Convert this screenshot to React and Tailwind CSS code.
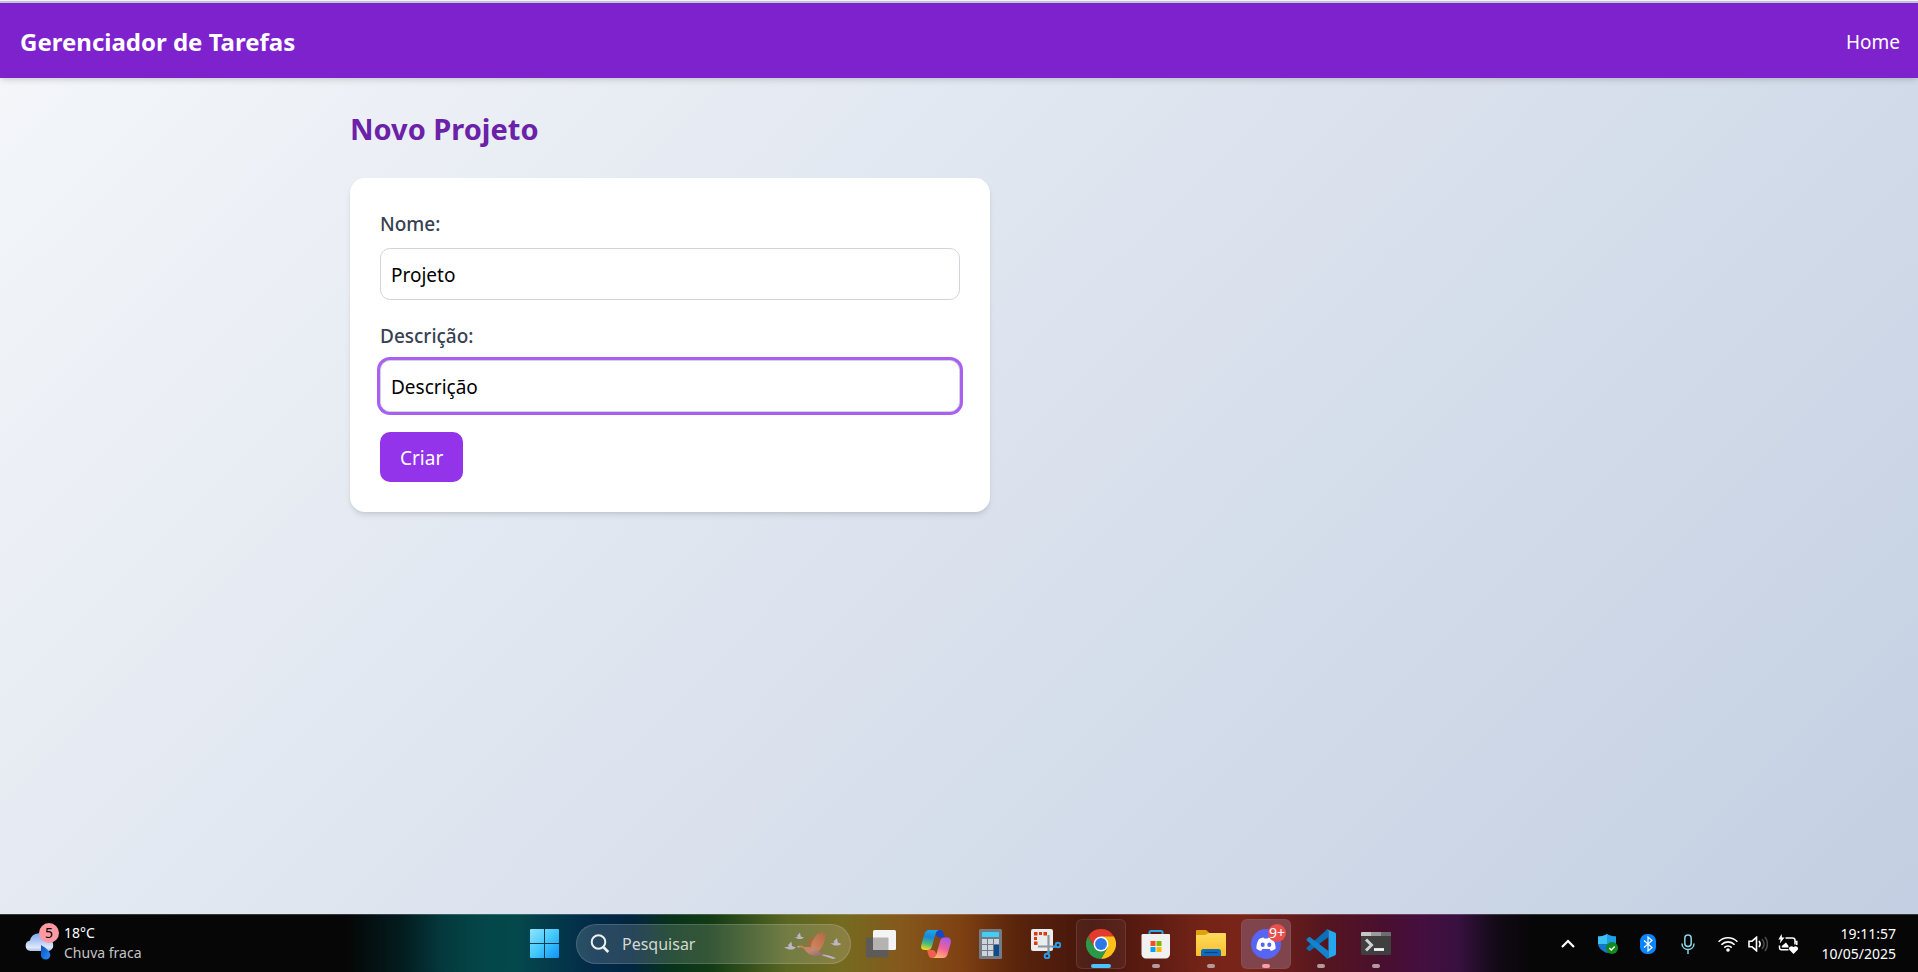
const uiFont = "font-['Noto_Sans','Open_Sans',sans-serif]";

function Header() {
  return (
    <header className="border-t-2 border-[#c0c4d6] bg-[#7e22ce] shadow-md">
      <nav className="flex h-[75px] items-center justify-between pt-0.5 pr-[18px] pl-5 text-white">
        <a href="#inicio" className="text-[24px] leading-8 font-bold">Gerenciador de Tarefas</a>
        <a href="#home" className="text-[19px] leading-8">Home</a>
      </nav>
    </header>
  );
}

function Field({ id, label, value, active }) {
  return (
    <div className="flex flex-col gap-2">
      <label htmlFor={id} className="text-[19px] leading-8 font-medium text-[#374151]">{label}</label>
      <input
        id={id}
        name={id}
        type="text"
        defaultValue={value}
        className={
          "h-[52px] w-full rounded-[10px] border border-[#d1d5db] bg-white px-[10px] pt-0.5 text-[19px] text-black outline-none focus:ring-3 focus:ring-[#a855f7] " +
          (active ? "ring-3 ring-[#a960f2]" : "")
        }
      />
    </div>
  );
}

function ProjectForm() {
  return (
    <main className="mx-auto w-full max-w-[1278px] flex-1 p-[30px]">
      <h1 className="mb-7 text-[29px] leading-[42px] font-bold text-[#6b21a8]">Novo Projeto</h1>
      <form
        onSubmit={(e) => e.preventDefault()}
        className="flex max-w-[640px] flex-col gap-5 rounded-[15px] bg-white p-[30px] shadow-md"
      >
        <Field id="nome" label="Nome:" value="Projeto" />
        <Field id="descricao" label="Descrição:" value="Descrição" active />
        <button type="submit" className="h-[50px] self-start rounded-[10px] bg-[#9333ea] px-5 pt-0.5 text-[19px] text-white">
          Criar
        </button>
      </form>
    </main>
  );
}

function WeatherIcon() {
  return (
    <svg width="36" height="38" viewBox="0 0 36 38">
      <defs>
        <linearGradient id="cloud" x1="0" y1="0" x2="0" y2="1">
          <stop offset="0" stopColor="#7fa6ee" />
          <stop offset="0.5" stopColor="#b9cdf5" />
          <stop offset="0.8" stopColor="#dfe8fa" />
          <stop offset="1" stopColor="#a9bfec" />
        </linearGradient>
        <linearGradient id="drop" x1="0" y1="0" x2="1" y2="1">
          <stop offset="0" stopColor="#0b50b8" />
          <stop offset="1" stopColor="#2b90ff" />
        </linearGradient>
      </defs>
      <path d="M6.500 28a5.300 5.300 0 0 1-.5-10.500A9.500 9.500 0 0 1 24 16a6.200 6.200 0 0 1 1 12z" fill="url(#cloud)" />
      <path d="M17 22c5 3 9.200 6 9.200 10.200 0 2.400-2 4.300-4.600 4.300S17 34.600 17 32.200z" fill="url(#drop)" />
      <circle cx="25" cy="10" r="10" fill="#ff99a4" />
    </svg>
  );
}

function WindowsIcon() {
  return (
    <svg width="30" height="30" viewBox="0 0 30 30">
      <defs>
        <linearGradient id="win" gradientUnits="userSpaceOnUse" x1="0" y1="0" x2="29" y2="29">
          <stop offset="0" stopColor="#8ee4ff" />
          <stop offset="0.500" stopColor="#45c8fd" />
          <stop offset="1" stopColor="#0a94f8" />
        </linearGradient>
      </defs>
      <path d="M1 0h13v14H0V1a1 1 0 0 1 1-1zM15 0h13a1 1 0 0 1 1 1v13H15zM0 15h14v14H1a1 1 0 0 1-1-1zM15 15h14v13a1 1 0 0 1-1 1H15z" fill="url(#win)" />
    </svg>
  );
}

function SearchIcon() {
  return (
    <svg width="20" height="20" viewBox="0 0 20 20" fill="none" stroke="#eef0ee" strokeWidth="2">
      <circle cx="8.500" cy="8" r="6.800" />
      <path d="M13.300 13l5 5" strokeWidth="2.600" />
    </svg>
  );
}

function BirdsIcon() {
  return (
    <svg width="60" height="32" viewBox="0 0 60 32">
      <defs>
        <linearGradient id="wing" x1="1" y1="0" x2="0" y2="1">
          <stop offset="0" stopColor="#b5653c" />
          <stop offset="1" stopColor="#cf8a66" />
        </linearGradient>
        <linearGradient id="goose" x1="0" y1="0" x2="1" y2="1">
          <stop offset="0" stopColor="#d07a48" />
          <stop offset="0.500" stopColor="#c08a70" />
          <stop offset="1" stopColor="#8e6470" />
        </linearGradient>
      </defs>
      <g fill="#bdb4c4">
        <path d="M2 19.500l5-1-1-1.500 3.500-3.500L10 18l4 1.500-3 2H7z" />
        <path d="M12.500 9.500l3.500-.5-1-1 3-3.500.7 4 3.300 1-2.500 1.500h-3z" />
        <path d="M48.500 15.500l4-.5-1-1.500 3.500-3.500.8 4.500 3.700 1.500-3 1.500h-4z" />
      </g>
      <path d="M39 26l8 1.500 7 2.500-3 1-12-4z" fill="#bdb4c4" />
      <path d="M26 19l.5-8 3-1.500L33 19z" fill="#a9683f" />
      <path d="M29 20c0-6 3-11 8.500-16l.5 3 3-4.500v4.500L44.500 5 43 11c-1 5-3 9-6 12z" fill="url(#wing)" />
      <path d="M16 18.500c1.500-1.800 3.500-1.500 5-.3 2 1.300 4 .8 6.500.8 6 .5 9 5 14 8-7 2.500-15 .5-18.500-5-1.500-2-3-2.500-5-2.500z" fill="url(#goose)" />
      <path d="M14.500 19l2.500-1 .5 1.500z" fill="#d0c4c4" />
    </svg>
  );
}

function TaskViewIcon() {
  return (
    <svg width="30" height="30" viewBox="0 0 30 30">
      <rect x="0" y="8.500" width="22.500" height="20" rx="1.500" fill="#5c5b59" />
      <rect x="7" y="1" width="23" height="20" rx="1.500" fill="#f4f4f4" />
      <path d="M7 8.500h15.500v12.500H8a1 1 0 0 1-1-1z" fill="#b5b3b1" />
    </svg>
  );
}

function CopilotIcon() {
  return (
    <svg width="30" height="28" viewBox="0 0 30 28">
      <defs>
        <linearGradient id="copA" x1="0.500" y1="0" x2="0.300" y2="1">
          <stop offset="0" stopColor="#1aa7ee" />
          <stop offset="0.350" stopColor="#1b86d8" />
          <stop offset="0.700" stopColor="#4cbc78" />
          <stop offset="1" stopColor="#f8d81c" />
        </linearGradient>
        <linearGradient id="copB" x1="0.700" y1="0" x2="0.300" y2="1">
          <stop offset="0" stopColor="#a45bea" />
          <stop offset="0.500" stopColor="#f0609a" />
          <stop offset="1" stopColor="#ffb870" />
        </linearGradient>
      </defs>
      <path d="M14 0h5c2 0 3 1 3.600 3l1.400 4.500h-5c-2.500 0-3.500-1.500-4-3z" fill="#1846c8" />
      <path d="M16 28h-5c-2 0-3-1-3.600-3L6 20h5c2.500 0 3.500 1.500 4 3.500z" fill="#f0604c" />
      <path d="M8 0h11c-2.500 0-3.800 1.500-4.500 4L11 16.200C10.200 19 9 20 6.700 20H4c-3.500 0-4.500-2-3.600-5.500L3.200 4.500C4 1.500 5.500 0 8 0z" fill="url(#copA)" />
      <path d="M22 28H11c2.500 0 3.800-1.500 4.500-4L19 11.500c.8-2.800 2-4 4.300-4H26c3.500 0 4.500 2.500 3.600 6L26.800 23.500C26 26.500 24.500 28 22 28z" fill="url(#copB)" />
    </svg>
  );
}

function CalculatorIcon() {
  return (
    <svg width="24" height="30" viewBox="0 0 24 30">
      <rect width="23" height="30" rx="1.500" fill="#737b84" />
      <rect x="3" y="3" width="17" height="5" rx="0.500" fill="#42cdf2" />
      <path d="M3 10h5v5H3zM9 10h5v5H9zM15 10h5v5h-5zM3 16h5v5H3zM9 16h5v5H9zM3 22h5v5H3zM9 22h5v5H9z" fill="#cdd4dc" />
      <path d="M15 16h5v11h-5z" fill="#104a8e" />
    </svg>
  );
}

function SnipIcon() {
  return (
    <svg width="30" height="30" viewBox="0 0 30 30">
      <rect width="22" height="22" rx="2" fill="#ebecee" />
      <path d="M3 3h3.500v3.500H3zM8 3h3v3H8zM12.500 3h3.500v3.500h-3.500zM3 8h3v3H3zM3 12.500h3.500V16H3z" fill="#d83b10" />
      <path d="M7 17.500h18M17.500 6v18" stroke="#8f979e" strokeWidth="2.200" />
      <circle cx="27" cy="16" r="2.300" fill="none" stroke="#2a9be4" strokeWidth="2" />
      <circle cx="16" cy="27" r="2.300" fill="none" stroke="#2a9be4" strokeWidth="2" />
      <path d="M21.500 18.200l3.500-1M18 21.500l-1 3.500" stroke="#2a9be4" strokeWidth="2" />
    </svg>
  );
}

function ChromeIcon() {
  return (
    <svg width="30" height="30" viewBox="0 0 48 48">
      <path d="M24 24L3.200 12A24 24 0 0 1 44.800 12z" fill="#e33b2e" />
      <path d="M24 12h20.800A24 24 0 0 1 24 48l10.400-18z" fill="#fbc116" />
      <path d="M3.200 12L13.600 30 24 24V12z" fill="#e33b2e" />
      <path d="M3.200 12A24 24 0 0 0 24 48l10.400-18H13.600z" fill="#2a9a48" />
      <circle cx="24" cy="24" r="12" fill="#fff" />
      <circle cx="24" cy="24" r="9.500" fill="#2c78e8" />
    </svg>
  );
}

function StoreIcon() {
  return (
    <svg width="30" height="30" viewBox="0 0 30 30">
      <path d="M8.500 6V3.500A1.500 1.500 0 0 1 10 2h10a1.500 1.500 0 0 1 1.500 1.500V6" fill="none" stroke="#28a8ea" strokeWidth="2" />
      <path d="M2 5h26a1 1 0 0 1 1 1v19a4.500 4.500 0 0 1-4.500 4.500H5A4.500 4.500 0 0 1 .5 25V6A1.500 1.500 0 0 1 2 5z" fill="#f1f1f2" />
      <path d="M9.500 12h5v5h-5z" fill="#f25022" />
      <path d="M15.500 12h5v5h-5z" fill="#7fba00" />
      <path d="M9.500 18h5v5h-5z" fill="#00a4ef" />
      <path d="M15.500 18h5v5h-5z" fill="#ffb900" />
    </svg>
  );
}

function FolderIcon() {
  return (
    <svg width="30" height="27" viewBox="0 0 30 27">
      <defs>
        <linearGradient id="folder" x1="0" y1="0" x2="0" y2="1">
          <stop offset="0" stopColor="#ffdb5c" />
          <stop offset="1" stopColor="#f9bf2c" />
        </linearGradient>
      </defs>
      <path d="M1 0h9l3 2.500V7H0V1a1 1 0 0 1 1-1z" fill="#e0a010" />
      <path d="M0 5h9l4-2h16a1 1 0 0 1 1 1v21a1 1 0 0 1-1 1H1a1 1 0 0 1-1-1z" fill="url(#folder)" />
      <path d="M5 26v-4.500A2.500 2.500 0 0 1 7.500 19h15a2.500 2.500 0 0 1 2.500 2.500V26z" fill="#0f6cbd" />
      <path d="M8.500 22.500h13" stroke="#0a3f80" strokeWidth="1.200" />
    </svg>
  );
}

function DiscordIcon() {
  return (
    <svg width="30" height="30" viewBox="0 0 30 30">
      <circle cx="15" cy="15" r="15" fill="#5865f2" />
      <path d="M11.500 8.700c1.200-.4 1.500.6 1.800.9h3.400c.3-.3.600-1.300 1.800-.9 1.400.3 2.600.8 3.600 1.500 1.800 3 2.700 6.200 2.400 9.600-1.600 1.300-3.100 1.900-4.600 2.100l-1.200-2h-7.400l-1.200 2c-1.500-.2-3-.8-4.600-2.100-.3-3.400.6-6.600 2.400-9.600 1-.7 2.200-1.200 3.600-1.500z" fill="#fff" />
      <ellipse cx="11.700" cy="15.800" rx="2" ry="2.200" fill="#5865f2" />
      <ellipse cx="18.300" cy="15.800" rx="2" ry="2.200" fill="#5865f2" />
    </svg>
  );
}

function CodeIcon() {
  return (
    <svg width="30" height="30" viewBox="0 0 30 30">
      <path d="M.8 18.500a1 1 0 0 0 0 1.500l1.800 1.700a1.300 1.300 0 0 0 1.600 0L22.500 8V1L21 .5z" fill="#0b70b8" />
      <path d="M.8 11.500a1 1 0 0 1 0-1.500l1.800-1.700a1.300 1.300 0 0 1 1.600 0L22.500 22v7l-1.500.5z" fill="#1583cc" />
      <path d="M21 29.700c-.6.200-1.200 0-1.700-.4 1 .5 3.200 0 3.200-1.600V2.300c0-1.600-2.200-2.100-3.200-1.600.5-.4 1.100-.6 1.700-.4l7.900 3.300A1.700 1.700 0 0 1 30 5.200v19.600c0 .7-.4 1.300-1.100 1.600z" fill="#25a7f0" />
    </svg>
  );
}

function TerminalIcon() {
  return (
    <svg width="30" height="23" viewBox="0 0 30 23">
      <rect width="30" height="23" rx="1.500" fill="#3f3f40" />
      <path d="M1 0h9v4H0V1a1 1 0 0 1 1-1z" fill="#c6c6c6" />
      <path d="M10 0h10v4H10z" fill="#9c9c9c" />
      <path d="M20 0h9a1 1 0 0 1 1 1v3H20z" fill="#6e6e6e" />
      <path d="M5 7.500l5.500 5.500L5 18.500" fill="none" stroke="#d0d0d0" strokeWidth="3" />
      <path d="M13 17.500h10" stroke="#f4f4f4" strokeWidth="2.800" />
    </svg>
  );
}

const idle = "bg-[#b59a9c] w-2";

const apps = [
  { name: "Visão de tarefas", Icon: TaskViewIcon },
  { name: "Copilot", Icon: CopilotIcon },
  { name: "Calculadora", Icon: CalculatorIcon },
  { name: "Ferramenta de Captura", Icon: SnipIcon },
  { name: "Google Chrome", Icon: ChromeIcon, cell: "border-white/10 bg-white/5", mark: "bg-[#4cc2ff] w-5" },
  { name: "Microsoft Store", Icon: StoreIcon, mark: idle },
  { name: "Explorador de Arquivos", Icon: FolderIcon, mark: idle },
  { name: "Discord", Icon: DiscordIcon, cell: "border-white/5 bg-[#80444c]", mark: "bg-[#ff99a4] w-2", badge: "9+" },
  { name: "Visual Studio Code", Icon: CodeIcon, mark: idle },
  { name: "Terminal", Icon: TerminalIcon, mark: idle },
];

function AppButton({ name, Icon, cell = "border-transparent", mark, badge }) {
  return (
    <button type="button" aria-label={name} className={"relative flex size-[50px] items-center justify-center rounded-md border " + cell}>
      <Icon />
      {mark && <span className={"absolute bottom-0 left-1/2 h-1 -translate-x-1/2 rounded-full " + mark} />}
      {badge && (
        <span className="absolute top-1 right-1 flex size-[18px] items-center justify-center rounded-full bg-[#e8504f] text-[14px] leading-none text-white">
          {badge}
        </span>
      )}
    </button>
  );
}

function TrayIcons() {
  return (
    <div className="flex items-center">
      <button type="button" aria-label="Ícones ocultos" className="flex w-10 justify-center">
        <svg width="14" height="9" viewBox="0 0 14 9" fill="none" stroke="#fff" strokeWidth="2.200">
          <path d="M1 8l6-6 6 6" />
        </svg>
      </button>
      <button type="button" aria-label="Segurança" className="flex w-10 justify-center">
        <svg width="20" height="20" viewBox="0 0 20 20">
          <path d="M0 2.500C4 2.500 7 1.500 9 0c2 1.500 5 2.500 9 2.500V9c0 5-4 8-9 10C4 17 0 14 0 9z" fill="#1378cc" />
          <path d="M0 2.500C4 2.500 7 1.500 9 0v10H0z" fill="#3ec2f4" />
          <path d="M9 0c2 1.500 5 2.500 9 2.500V10H9z" fill="#1ea0e8" />
          <circle cx="14" cy="14" r="6" fill="#128a1c" />
          <path d="M11.300 14l2 2 3.400-3.600" fill="none" stroke="#fff" strokeWidth="1.400" />
        </svg>
      </button>
      <button type="button" aria-label="Bluetooth" className="flex w-10 justify-center">
        <svg width="16" height="20" viewBox="0 0 16 20">
          <rect width="16" height="20" rx="7" fill="#0a84ff" />
          <path d="M4 6.500l8 7L8 17V3l4 3.500-8 7" fill="none" stroke="#fff" strokeWidth="1.200" />
        </svg>
      </button>
      <button type="button" aria-label="Microfone" className="flex w-10 justify-center">
        <svg width="14" height="20" viewBox="0 0 14 20" fill="none" stroke="#8ad4e4" strokeWidth="1.500">
          <rect x="3.800" y="1" width="6.400" height="11.500" rx="3.200" />
          <path d="M1 9.500c0 3.500 2.500 6 6 6s6-2.500 6-6M7 15.500V20" />
        </svg>
      </button>
      <button type="button" aria-label="Rede, volume e bateria" className="flex items-center gap-[10px] px-[10px]">
        <svg width="20" height="16" viewBox="0 0 20 16" fill="none" stroke="#fff" strokeWidth="1.600">
          <path d="M.6 5.800a13 13 0 0 1 18.800 0M3.400 8.700a9.200 9.200 0 0 1 13.200 0M6.300 11.600a5.200 5.200 0 0 1 7.400 0" />
          <circle cx="10" cy="14" r="1.800" fill="#fff" stroke="none" />
        </svg>
        <svg width="20" height="16" viewBox="0 0 20 16" fill="none" stroke="#fff" strokeWidth="1.600">
          <path d="M1 5.200h3L8.500 1.300v13.400L4 10.800H1z" />
          <path d="M11 5c1.500 2 1.500 4 0 6" />
          <path d="M14 3c2.500 3 2.500 7 0 10M17 1c3.200 4 3.200 10 0 14" stroke="#4a4a4a" />
        </svg>
        <svg width="21" height="20" viewBox="0 0 21 20" fill="none" stroke="#fff" strokeWidth="1.500">
          <path d="M7.500 4H14.500A2.500 2.500 0 0 1 17 6.500V10.500M10.500 15.800H3.500A2 2 0 0 1 1.500 13.800V11.500M17 7.500h1.800v3.500" />
          <path d="M3.600 0L.4 5.600h2.200L1.800 9.500l4.700-6H4z" fill="#fff" stroke="none" />
          <path d="M3.800 13.500h6.700V12L8 8.500 3.800 12z" fill="#fff" stroke="none" />
          <path d="M15.500 20l-4.200-4.300c-1.500-2.600 2-4.800 4.200-2.600 2.200-2.200 5.700 0 4.200 2.600z" fill="#fff" stroke="none" />
        </svg>
      </button>
    </div>
  );
}

function Taskbar() {
  return (
    <footer className="grid h-[58px] grid-cols-[1fr_auto_1fr] items-center border-t border-white/20 bg-[linear-gradient(90deg,#060606_0%,#060606_18%,#031c1f_21%,#04383c_23%,#044648_25%,#04484c_27%,#04384a_29%,#022a48_31%,#03263f_33%,#08331a_35%,#123a15_37%,#34501c_39%,#5a6622_41%,#756a20_44%,#85581c_47%,#7f4212_50%,#5a240c_53%,#45140c_57%,#762418_63%,#7a2418_65%,#55161f_69%,#4a0f2e_72%,#450f3e_74%,#381040_76%,#120a16_78%,#060606_80%)] pl-0.5 text-[14px] text-white">
      <button type="button" className="flex items-center gap-1 justify-self-start pb-1 pl-[22px] text-left">
        <span className="relative">
          <WeatherIcon />
          <span className="absolute top-0 right-[1px] flex size-5 items-center justify-center text-[14px] leading-none text-black">5</span>
        </span>
        <span className="flex flex-col pt-0.5 leading-5">
          <span>18°C</span>
          <span className="text-[#c4c4c4]">Chuva fraca</span>
        </span>
      </button>

      <div className="flex items-center gap-[5px]">
        <button type="button" aria-label="Iniciar" className="flex h-[50px] w-[52px] items-center justify-center">
          <WindowsIcon />
        </button>
        <label className="flex h-10 w-[275px] items-center gap-3 rounded-full border border-white/15 bg-white/15 pr-2 pl-[13px]">
          <SearchIcon />
          <input
            type="text"
            aria-label="Pesquisar"
            placeholder="Pesquisar"
            className="min-w-0 flex-1 bg-transparent text-[16px] outline-none placeholder:text-[#d3d9d0]"
          />
          <BirdsIcon />
        </label>
        {apps.map((app) => (
          <AppButton key={app.name} {...app} />
        ))}
      </div>

      <div className="flex items-center justify-self-end pr-[22px]">
        <TrayIcons />
        <div className="w-[87px] text-right leading-5">
          <div>19:11:57</div>
          <div>10/05/2025</div>
        </div>
      </div>
    </footer>
  );
}

export default function App() {
  return (
    <div className={"flex min-h-screen flex-col " + uiFont}>
      <div className="flex flex-1 flex-col border-t border-[#f1f3fa] bg-linear-135 from-[#f5f7fa] to-[#c3cfe2]">
        <Header />
        <ProjectForm />
      </div>
      <Taskbar />
    </div>
  );
}
